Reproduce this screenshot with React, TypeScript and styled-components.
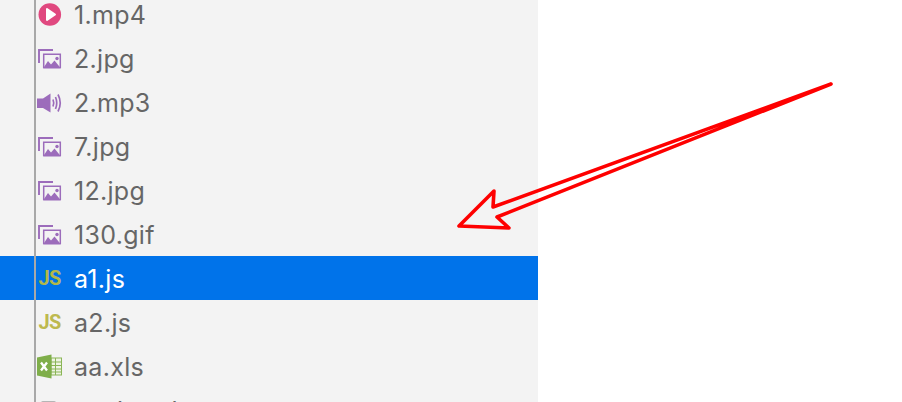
import React from "react"
import styled, { createGlobalStyle } from "styled-components"

const GlobalStyle = createGlobalStyle`
  html, body {
    margin: 0;
    padding: 0;
    height: 402px;
    overflow: hidden;
    background: #fff;
  }
`

const Page = styled.div`
  position: relative;
  width: 902px;
  height: 402px;
  overflow: hidden;
  background: #fff;
  font-family: Inter, "Liberation Sans", Arial, sans-serif;
`

const Sidebar = styled.ul`
  position: relative;
  width: 538px;
  height: 402px;
  margin: 0;
  padding: 0;
  list-style: none;
  overflow: hidden;
  background: #f3f3f3;
`

const TreeLine = styled.div`
  position: absolute;
  left: 34px;
  top: 0;
  bottom: 0;
  width: 2px;
  background: #a8a8a8;
`

const Rows = styled.div`
  margin-top: -8px;
`

const Row = styled.li<{ $selected?: boolean }>`
  display: flex;
  align-items: center;
  height: 44px;
  padding-left: 37px;
  gap: 12px;
  font-size: 25px;
  letter-spacing: 0.3px;
  color: ${(p) => (p.$selected ? "#fff" : "#666")};
  background: ${(p) => (p.$selected ? "#0073ea" : "transparent")};
`

const FileName = styled.span`
  padding-top: 2px;
`

const IconBox = styled.span`
  display: flex;
  width: 25px;
  height: 25px;
  flex: none;
  align-items: center;
  justify-content: center;
`

const Arrow = styled.svg`
  position: absolute;
  left: 0;
  top: 0;
`

const PlayIcon = () => (
  <svg width="25" height="25" viewBox="0 0 25 25">
    <circle cx="12.8" cy="12.5" r="11.3" fill="#e0487f" />
    <path d="M10 7 L18 12.5 L10 18 Z" fill="#fff" stroke="#fff" strokeWidth="2" strokeLinejoin="round" />
  </svg>
)

const ImageIcon = () => (
  <svg width="25" height="25" viewBox="0 0 25 25">
    <path d="M2 17 V4 H16" fill="none" stroke="#9c6cbb" strokeWidth="1.9" />
    <path d="M6.7 22 V8.2 H23.3 V22" fill="none" stroke="#9c6cbb" strokeWidth="1.5" />
    <path d="M6 22.5 L11 15 L14 18.5 L17.5 14.5 L24 22.5 Z" fill="#9c6cbb" />
    <circle cx="20" cy="12.5" r="1.7" fill="#9c6cbb" />
  </svg>
)

const AudioIcon = () => (
  <svg width="25" height="25" viewBox="0 0 25 25">
    <path d="M0 8.5 H6 L13.5 3.5 V22.5 L6 18 H0 Z" fill="#9c6cbb" />
    <path d="M16 9.5 Q17.5 13 16 16.5" fill="none" stroke="#9c6cbb" strokeWidth="1.7" />
    <path d="M18.5 7 Q21 13 18.5 19" fill="none" stroke="#9c6cbb" strokeWidth="1.7" />
    <path d="M21 4.5 Q25.5 13 21 21.5" fill="none" stroke="#9c6cbb" strokeWidth="1.7" />
  </svg>
)

const JsLabel = styled.span<{ $selected?: boolean }>`
  font-family: Roboto, "Liberation Sans", sans-serif;
  font-size: 20px;
  font-weight: 700;
  letter-spacing: -0.8px;
  color: ${(p) => (p.$selected ? "#b3b84a" : "#bdb94f")};
`

const ExcelIcon = () => (
  <svg width="25" height="25" viewBox="0 0 25 25">
    <rect x="14" y="4" width="10.5" height="17" fill="#eef4e3" stroke="#8ab556" strokeWidth="1" />
    <path d="M14 8 H24 M14 11.5 H24 M14 15 H24 M14 18 H24 M18.5 4 V21" stroke="#8ab556" strokeWidth="1" />
    <path d="M0 3.5 L14.5 0.5 V24.5 L0 21.5 Z" fill="#7fae4a" />
    <path d="M4 8.5 L10 16.5 M10 8.5 L4 16.5" stroke="#fff" strokeWidth="2.3" />
  </svg>
)

const BlankIcon = () => (
  <svg width="25" height="25" viewBox="0 0 25 25">
    <rect x="4" y="3" width="15" height="20" rx="2" fill="#b5b5b5" />
  </svg>
)

const files = [
  { name: "1.mp4", icon: <PlayIcon /> },
  { name: "2.jpg", icon: <ImageIcon /> },
  { name: "2.mp3", icon: <AudioIcon /> },
  { name: "7.jpg", icon: <ImageIcon /> },
  { name: "12.jpg", icon: <ImageIcon /> },
  { name: "130.gif", icon: <ImageIcon /> },
  { name: "a1.js", icon: <JsLabel $selected>JS</JsLabel>, selected: true },
  { name: "a2.js", icon: <JsLabel>JS</JsLabel> },
  { name: "aa.xls", icon: <ExcelIcon /> },
  { name: "aaab.md", icon: <BlankIcon /> },
]

export default function App() {
  return (
    <Page>
      <GlobalStyle />
      <Sidebar>
        <Rows>
          {files.map((f) => (
            <Row key={f.name} $selected={f.selected}>
              <IconBox>{f.icon}</IconBox>
              <FileName>{f.name}</FileName>
            </Row>
          ))}
        </Rows>
        <TreeLine />
      </Sidebar>
      <Arrow width="902" height="402" viewBox="0 0 902 402">
        <path
          d="M831 84 L493 207 L494 191 L459 226 L509 228 L497 217 Z"
          fill="none"
          stroke="#fe0000"
          strokeWidth="3.6"
          strokeLinejoin="round"
          strokeLinecap="round"
        />
      </Arrow>
    </Page>
  )
}
